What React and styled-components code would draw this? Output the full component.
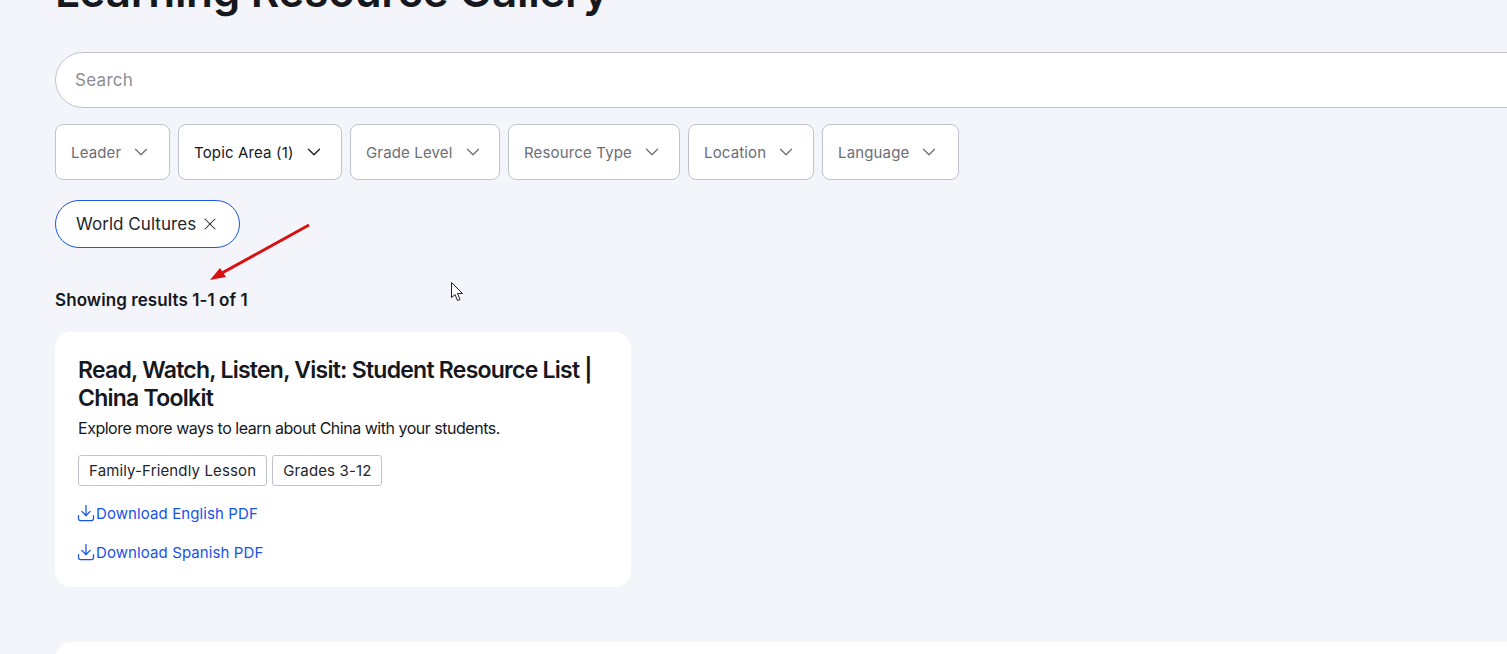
import React from 'react';
import styled, { createGlobalStyle } from 'styled-components';
import { ChevronDown, X, Download } from 'lucide-react';

const GlobalStyle = createGlobalStyle`
  html, body {
    margin: 0;
    padding: 0;
    height: 654px;
    overflow: hidden;
    background: #f4f5fb;
  }
  * { box-sizing: border-box; }
`

const Page = styled.div`
  position: relative;
  width: 1507px;
  height: 654px;
  overflow: hidden;
  padding-left: 55px;
  font-family: Inter, "Liberation Sans", sans-serif;
  color: #16181d;
`
const Main = styled.div`
  width: 1640px;
  display: flex;
  flex-direction: column;
  align-items: flex-start;
`
const Heading = styled.h1`
  margin: -37px 0 0 0;
  height: 89px;
  font-size: 44px;
  line-height: 56px;
  font-weight: 600;
  letter-spacing: -0.3px;
  color: #16181d;
`
const SearchBox = styled.div`
  width: 100%;
  height: 56px;
  padding: 0 19px;
  display: flex;
  align-items: center;
  background: #fff;
  border: 1px solid #bfc3d0;
  border-radius: 28px;
  font-size: 17px;
  letter-spacing: 0.3px;
  color: #8b8d93;
`
const Filters = styled.div`
  display: flex;
  gap: 8px;
  margin-top: 16px;
`
const Filter = styled.button`
  width: ${p => p.$width}px;
  height: 56px;
  padding: 0 0 0 15px;
  display: flex;
  align-items: center;
  gap: 9px;
  background: #fff;
  border: 1px solid #bfc3d0;
  border-radius: 8px;
  font-family: inherit;
  font-size: 15px;
  letter-spacing: 0.15px;
  color: ${p => (p.$active ? '#16181d' : '#6b6e76')};
`
const Chip = styled.div`
  height: 48px;
  width: 185px;
  margin-top: 20px;
  padding-left: 20px;
  display: flex;
  align-items: center;
  gap: 4px;
  background: #fff;
  border: 1px solid #1a55e3;
  border-radius: 24px;
  font-size: 17px;
  letter-spacing: 0.05px;
  color: #23262d;
`
const Results = styled.div`
  margin-top: 42px;
  height: 20px;
  font-size: 17px;
  line-height: 20px;
  font-weight: 600;
  letter-spacing: 0.08px;
`
const Card = styled.article`
  width: 576px;
  height: 255px;
  margin-top: 22px;
  padding: 24px 23px;
  background: #fff;
  border-radius: 16px;
`
const WideCard = styled.div`
  width: 100%;
  height: 200px;
  margin-top: 55px;
  background: #fff;
  border-radius: 16px;
`
const Title = styled.h2`
  margin: 0;
  font-size: 23px;
  line-height: 28px;
  font-weight: 600;
  letter-spacing: -0.75px;
`
const Description = styled.p`
  margin: 6px 0 0 0;
  font-size: 16px;
  line-height: 20px;
  letter-spacing: -0.48px;
`
const Tags = styled.div`
  display: flex;
  gap: 5px;
  margin-top: 17px;
`
const Tag = styled.span`
  height: 31px;
  padding: 0 10px;
  display: flex;
  align-items: center;
  border: 1px solid #bfc3d0;
  border-radius: 3px;
  font-size: 15px;
  letter-spacing: 0.14px;
  color: #23262d;
`
const DownloadLink = styled.a`
  display: flex;
  align-items: center;
  gap: 0.5px;
  height: 20px;
  margin-top: ${p => p.$top}px;
  margin-left: -2.5px;
  font-size: 15px;
  letter-spacing: 0.1px;
  color: #1652e8;
  text-decoration: none;
`
const Annotation = styled.svg`
  position: absolute;
  left: 0;
  top: 0;
  pointer-events: none;
`

const filters = [
  { label: 'Leader', width: 115 },
  { label: 'Topic Area (1)', width: 164, active: true },
  { label: 'Grade Level', width: 150 },
  { label: 'Resource Type', width: 172 },
  { label: 'Location', width: 126 },
  { label: 'Language', width: 137 },
]

export default function App() {
  return (
    <Page>
      <GlobalStyle />
      <Main>
        <Heading>Learning Resource Gallery</Heading>
        <SearchBox>Search</SearchBox>
        <Filters>
          {filters.map(f => (
            <Filter key={f.label} $width={f.width} $active={f.active}>
              {f.label}
              <ChevronDown size={22} strokeWidth={1.35} />
            </Filter>
          ))}
        </Filters>
        <Chip>
          World Cultures
          <X size={20} strokeWidth={1.25} />
        </Chip>
        <Results>Showing results 1-1 of 1</Results>
        <Card>
          <Title>Read, Watch, Listen, Visit: Student Resource List | China Toolkit</Title>
          <Description>Explore more ways to learn about China with your students.</Description>
          <Tags>
            <Tag>Family-Friendly Lesson</Tag>
            <Tag>Grades 3-12</Tag>
          </Tags>
          <DownloadLink href="#" $top={17}>
            <Download size={20} strokeWidth={1.5} />
            Download English PDF
          </DownloadLink>
          <DownloadLink href="#" $top={19}>
            <Download size={20} strokeWidth={1.5} />
            Download Spanish PDF
          </DownloadLink>
        </Card>
        <WideCard />
      </Main>
      <Annotation width="1507" height="654" viewBox="0 0 1507 654">
        <path d="M309 225 L222 273" stroke="#d8100f" strokeWidth="3" fill="none" />
        <path d="M210 280 L220 268 L226 277 Z" fill="#d8100f" />
        <path
          d="M451.5 282.5 V297.5 L455 294.5 L457.5 300.5 L460 299.5 L457.5 293.5 L462.5 293.5 Z"
          fill="#fff"
          stroke="#222"
          strokeWidth="1"
          strokeLinejoin="round"
        />
      </Annotation>
    </Page>
  );
}
